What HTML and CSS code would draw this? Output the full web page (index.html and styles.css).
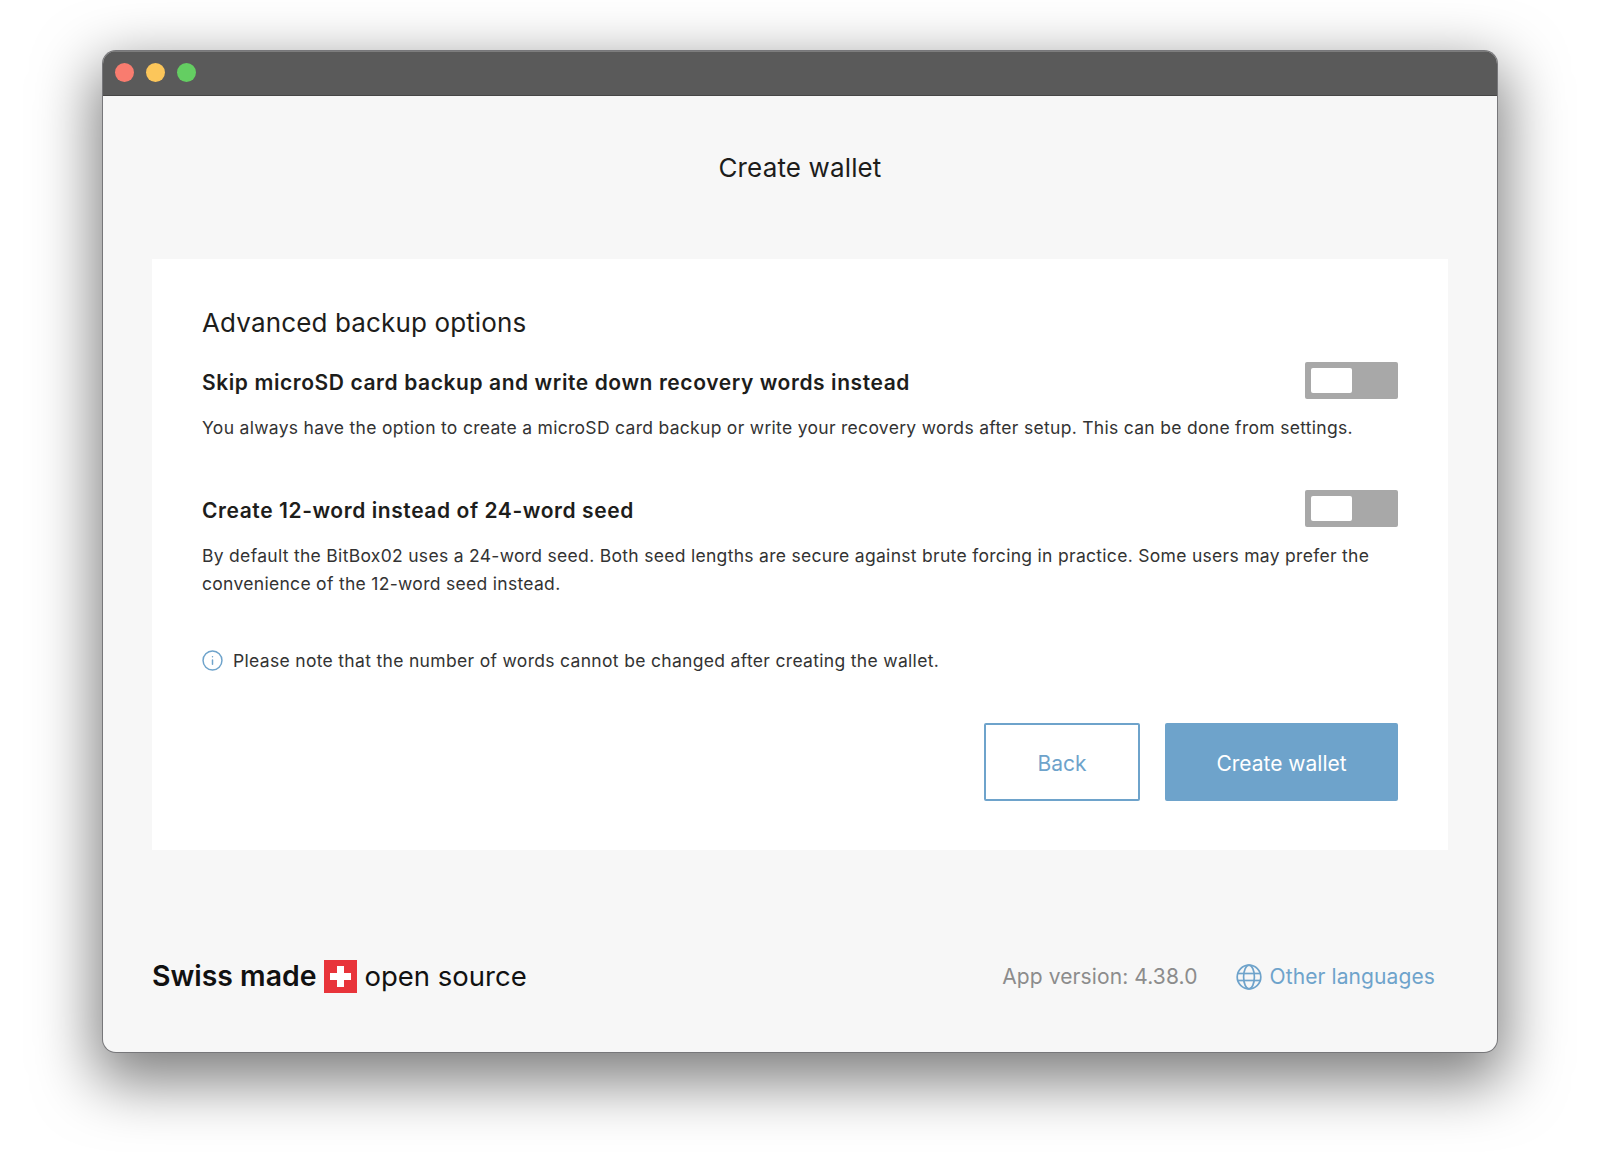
FILE: index.html
```html
<!DOCTYPE html>
<html lang="en">
<head>
  <meta charset="UTF-8">
  <meta name="viewport" content="width=device-width, initial-scale=1.0">
  <title>Create wallet</title>
  <link rel="stylesheet" href="styles.css">
</head>
<body>

  <div class="window">
    <!-- Title Bar -->
    <div class="titlebar">
      <span class="dot dot-red"></span>
      <span class="dot dot-yellow"></span>
      <span class="dot dot-green"></span>
    </div>

    <div class="content">
      <h1>Create wallet</h1>

      <!-- Options Card -->
      <div class="card">
        <h2>Advanced backup options</h2>

        <div class="option">
          <div class="option-head">
            <h3>Skip microSD card backup and write down recovery words instead</h3>
            <div class="toggle"><span class="knob"></span></div>
          </div>
          <p>You always have the option to create a microSD card backup or write your recovery words after setup. This can be done from settings.</p>
        </div>

        <div class="option">
          <div class="option-head">
            <h3>Create 12-word instead of 24-word seed</h3>
            <div class="toggle"><span class="knob"></span></div>
          </div>
          <p>By default the BitBox02 uses a 24-word seed. Both seed lengths are secure against brute forcing in practice. Some users may prefer the convenience of the 12-word seed instead.</p>
        </div>

        <div class="note">
          <svg class="info-icon" viewBox="0 0 20 20" fill="none" stroke="#6ea3cb" stroke-width="1.4" stroke-linecap="round">
            <circle cx="10" cy="10" r="9"></circle>
            <line x1="10" y1="9.5" x2="10" y2="13.5"></line>
            <line x1="10" y1="6.4" x2="10" y2="6.5"></line>
          </svg>
          <span>Please note that the number of words cannot be changed after creating the wallet.</span>
        </div>

        <div class="actions">
          <button class="btn btn-back">Back</button>
          <button class="btn btn-primary">Create wallet</button>
        </div>
      </div>

      <!-- Footer -->
      <div class="footer">
        <div class="brand">
          <strong>Swiss made</strong>
          <svg class="flag" viewBox="0 0 33 33">
            <rect width="33" height="33" fill="#e8343a"></rect>
            <path d="M13 6h7v7h7v7h-7v7h-7v-7H6v-7h7z" fill="#fff"></path>
          </svg>
          <span>open source</span>
        </div>
        <div class="meta">
          <span class="version">App version: 4.38.0</span>
          <a class="lang" href="#">
            <svg class="globe" viewBox="0 0 26 26" fill="none" stroke="#6ea3cb" stroke-width="1.7">
              <circle cx="13" cy="13" r="11.8"></circle>
              <ellipse cx="13" cy="13" rx="5.4" ry="11.8"></ellipse>
              <line x1="1.6" y1="9.5" x2="24.4" y2="9.5"></line>
              <line x1="1.6" y1="16.5" x2="24.4" y2="16.5"></line>
            </svg>
            Other languages
          </a>
        </div>
      </div>
    </div>
  </div>

</body>
</html>
```

FILE: styles.css
```css
/* Global Styles */
* {
  box-sizing: border-box;
}

body {
  font-family: Inter, "Liberation Sans", sans-serif;
  background-color: #ffffff;
  color: #1d1d1b;
  margin: 0;
  padding: 51px 103px 0;
  height: 1152px;
  overflow: hidden;
}

/* Window */
.window {
  height: 1001px;
  border-radius: 13px;
  overflow: hidden;
  background-color: #f7f7f7;
  box-shadow: 0 0 0 1px #77777a, 0 22px 60px 8px rgba(0, 0, 0, 0.5);
}

.titlebar {
  height: 45px;
  background-color: #5a5a5a;
  border-top: 1px solid #7d7d7d;
  border-bottom: 1px solid #464646;
  display: flex;
  align-items: center;
  gap: 12px;
  padding: 0 0 3px 12px;
}

.dot {
  width: 19px;
  height: 19px;
  border-radius: 50%;
}

.dot-red { background-color: #f97c6f; }
.dot-yellow { background-color: #fcc65a; }
.dot-green { background-color: #64ce62; }

.content {
  padding: 0 49px;
}

h1 {
  font-size: 26px;
  font-weight: 400;
  letter-spacing: 0.14px;
  line-height: 32px;
  text-align: center;
  margin: 56px 0 75px;
}

/* Card */
.card {
  background-color: #ffffff;
  padding: 48px 50px 50px;
  height: 591px;
}

h2 {
  font-size: 26px;
  font-weight: 400;
  letter-spacing: 0.14px;
  line-height: 32px;
  margin: 0 0 23px;
}

.option {
  margin-bottom: 48px;
}

.option-head {
  display: flex;
  justify-content: space-between;
  align-items: center;
  height: 37px;
  margin-bottom: 15px;
}

h3 {
  font-size: 21px;
  font-weight: 600;
  letter-spacing: 0.58px;
  margin: 4px 0 0;
}

.option p {
  font-size: 17.5px;
  letter-spacing: 0.3px;
  line-height: 28px;
  margin: 0;
  color: #333;
}

.toggle {
  width: 93px;
  height: 37px;
  background-color: #a8a8a8;
  border-radius: 2px;
  padding: 6px;
}

.knob {
  display: block;
  width: 41px;
  height: 25px;
  background-color: #fff;
  border-radius: 2px;
}

/* Note */
.note {
  display: flex;
  align-items: center;
  gap: 10px;
  font-size: 17.5px;
  letter-spacing: 0.32px;
  color: #333;
  margin-top: 52px;
}

.info-icon {
  width: 21px;
  height: 21px;
}

/* Buttons */
.actions {
  display: flex;
  justify-content: flex-end;
  gap: 25px;
  margin-top: 52px;
}

.btn {
  height: 78px;
  padding-top: 4px;
  font-family: inherit;
  font-size: 21px;
  border-radius: 2px;
  border: 2px solid #6ea3cb;
}

.btn-back {
  width: 156px;
  background-color: #fff;
  color: #6ea3cb;
}

.btn-primary {
  width: 233px;
  background-color: #6ea3cb;
  color: #fff;
}

/* Footer */
.footer {
  display: flex;
  justify-content: space-between;
  align-items: center;
  margin-top: 110px;
}

.brand {
  display: flex;
  align-items: center;
  gap: 8px;
  font-size: 28.4px;
  color: #111;
}

.brand strong {
  font-weight: 600;
  margin-top: -2px;
}

.brand span {
  font-size: 27.5px;
  margin: -2px 0 0 -1px;
}

.flag {
  width: 33px;
  height: 33px;
}

.meta {
  display: flex;
  align-items: center;
  gap: 38px;
  padding-right: 13px;
  font-size: 21px;
  letter-spacing: 0.1px;
}

.version {
  color: #8c8c8c;
}

.lang {
  display: flex;
  align-items: center;
  gap: 8px;
  color: #6ea3cb;
  text-decoration: none;
}

.globe {
  width: 26px;
  height: 26px;
}
```
